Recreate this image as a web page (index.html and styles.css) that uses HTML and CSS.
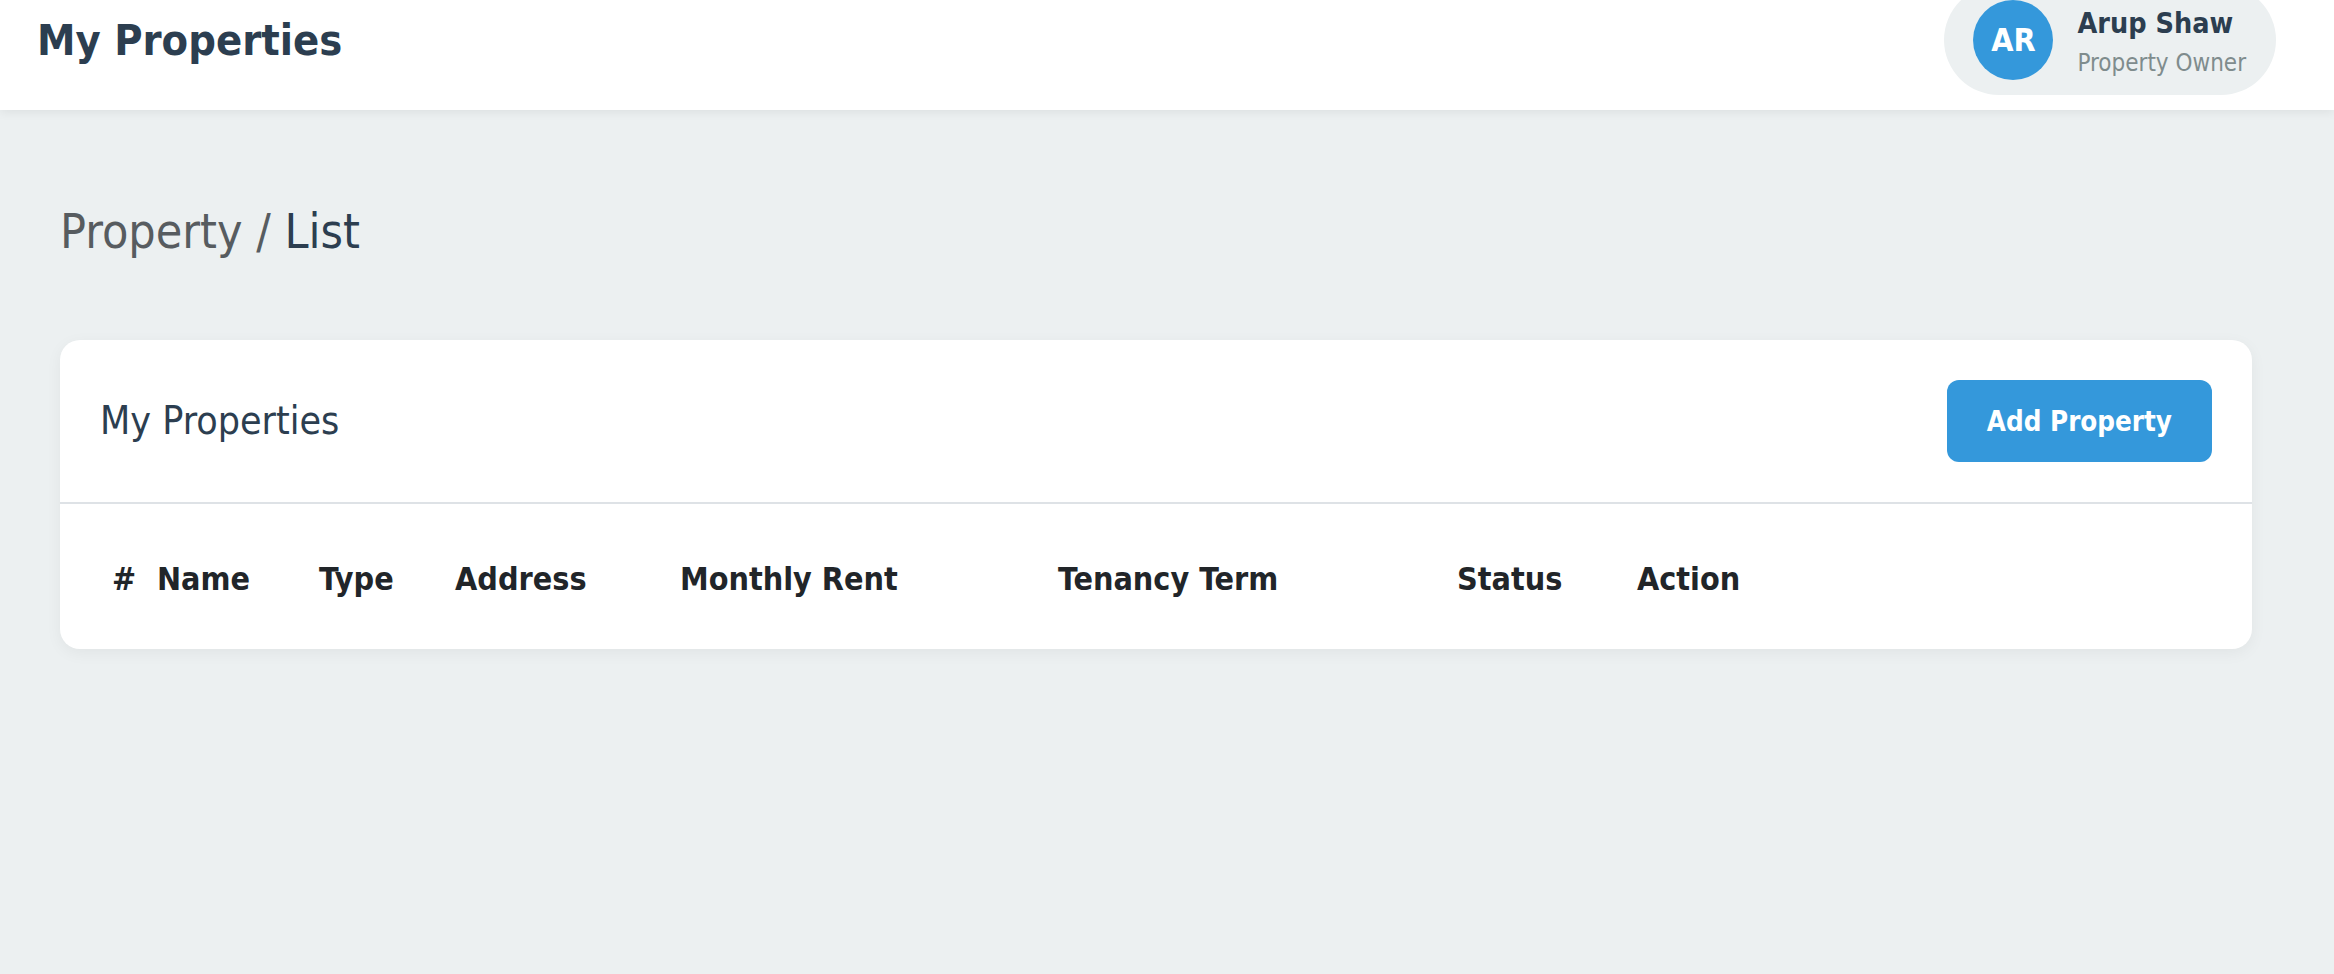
FILE: index.html
```html
<!DOCTYPE html>
<html lang="en">
<head>
<meta charset="utf-8">
<title>My Properties</title>
<link rel="stylesheet" href="styles.css">
</head>
<body>
<header class="topbar">
  <h1 class="brand">My Properties</h1>
  <div class="user-pill">
    <div class="avatar">AR</div>
    <div class="user-text">
      <div class="user-name">Arup Shaw</div>
      <div class="user-role">Property Owner</div>
    </div>
  </div>
</header>
<main class="content">
  <h2 class="crumb"><span class="crumb-muted">Property / </span><span class="crumb-current">List</span></h2>
  <section class="card">
    <div class="card-head">
      <h3 class="card-title">My Properties</h3>
      <button class="btn-add" type="button">Add Property</button>
    </div>
    <div class="card-body">
      <table class="prop-table">
        <colgroup>
          <col class="c-num"><col class="c-name"><col class="c-type"><col class="c-addr"><col class="c-rent"><col class="c-term"><col class="c-status"><col class="c-action">
        </colgroup>
        <thead>
          <tr>
            <th>#</th><th>Name</th><th>Type</th><th>Address</th><th>Monthly Rent</th><th>Tenancy Term</th><th>Status</th><th>Action</th>
          </tr>
        </thead>
        <tbody></tbody>
      </table>
    </div>
  </section>
</main>
</body>
</html>
```

FILE: styles.css
```css
* { box-sizing: border-box; }
html, body { margin: 0; padding: 0; }
body {
  background: #ecf0f1;
  font-family: "DejaVu Sans Condensed", "DejaVu Sans", sans-serif;
  color: #2c3e50;
  width: 2334px;
  height: 974px;
  overflow: hidden;
}
.topbar {
  height: 110px;
  background: #ffffff;
  display: flex;
  align-items: center;
  justify-content: space-between;
  padding: 0 58px 30px 37px;
  box-shadow: 0 2px 10px rgba(0, 0, 0, 0.07);
  position: relative;
  z-index: 1;
}
.brand {
  margin: 0;
  font-size: 43px;
  line-height: 52px;
  font-weight: bold;
  color: #2c3e50;
}
.user-pill {
  flex: none;
  height: 110px;
  background: #ecf0f1;
  border-radius: 55px;
  display: flex;
  align-items: center;
  gap: 24px;
  padding: 0 30px 0 29px;
}
.avatar {
  width: 80px;
  height: 80px;
  border-radius: 50%;
  background: #3498db;
  color: #ffffff;
  font-weight: bold;
  font-size: 32px;
  display: flex;
  align-items: center;
  justify-content: center;
}
.user-text { padding-top: 6px; }
.user-name {
  font-size: 28.5px;
  line-height: 34px;
  font-weight: bold;
  color: #2c3e50;
}
.user-role {
  margin-top: 5px;
  font-size: 24px;
  line-height: 34px;
  color: #7f8c8d;
}
.content {
  padding: 92px 82px 0 60px;
}
.crumb {
  margin: 0;
  font-size: 48px;
  line-height: 58px;
  font-weight: normal;
}
.crumb-muted { color: #575c60; }
.crumb-current { color: #2c3e50; }
.card {
  margin-top: 80px;
  background: #ffffff;
  border-radius: 20px;
  box-shadow: 0 4px 16px rgba(0, 0, 0, 0.05);
}
.card-head {
  display: flex;
  align-items: center;
  justify-content: space-between;
  padding: 40px;
  border-bottom: 2px solid #dee2e6;
}
.card-title {
  margin: 0;
  font-size: 39px;
  line-height: 50px;
  font-weight: normal;
  color: #2c3e50;
}
.btn-add {
  height: 82px;
  padding: 0 40px;
  border: none;
  border-radius: 12px;
  background: #3498db;
  color: #ffffff;
  font-family: inherit;
  font-weight: bold;
  font-size: 27.5px;
  line-height: 82px;
}
.card-body {
  padding: 40px 40px 35px;
}
.prop-table {
  border-collapse: collapse;
  table-layout: fixed;
  width: 1702px;
}
.prop-table th {
  text-align: left;
  padding: 12px 12px;
  font-size: 32px;
  line-height: 46px;
  font-weight: bold;
  color: #212529;
  white-space: nowrap;
}
.c-num { width: 45px; }
.c-name { width: 162px; }
.c-type { width: 136px; }
.c-addr { width: 225px; }
.c-rent { width: 378px; }
.c-term { width: 399px; }
.c-status { width: 180px; }
.c-action { width: 177px; }
```
